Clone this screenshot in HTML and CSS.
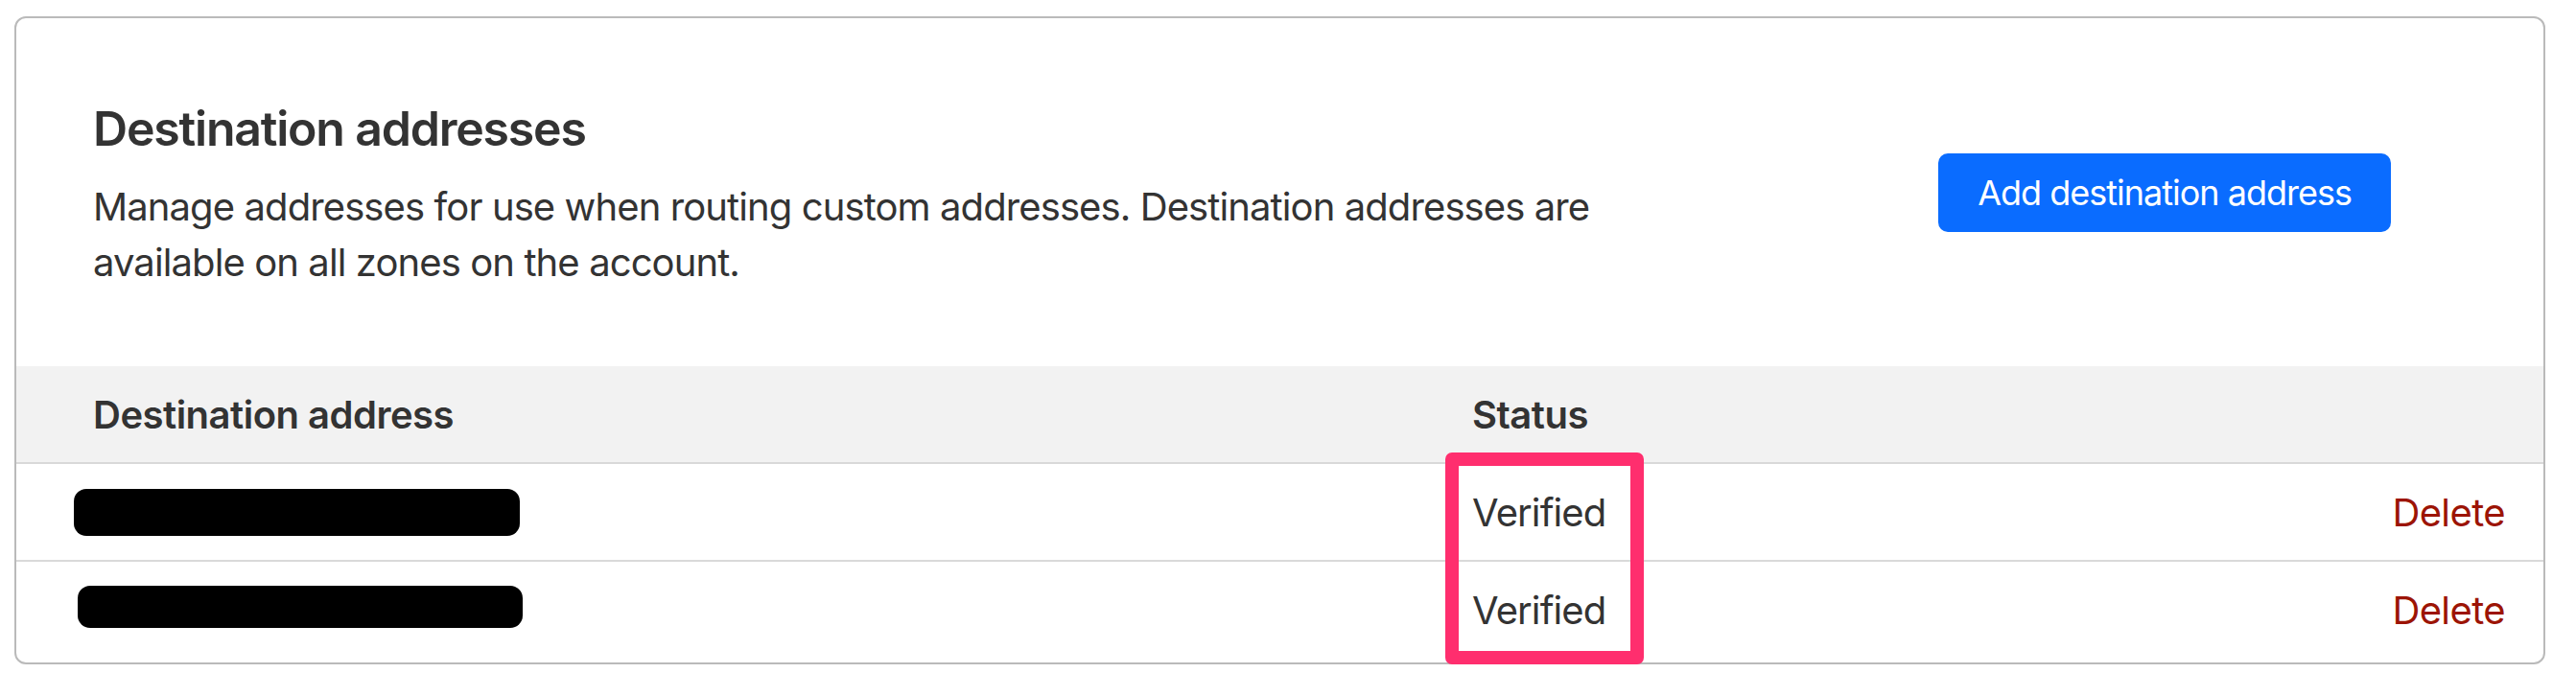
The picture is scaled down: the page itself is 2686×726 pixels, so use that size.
FILE: index.html
```html
<!DOCTYPE html>
<html lang="en">
<head>
<meta charset="utf-8">
<title>Destination addresses</title>
<link rel="stylesheet" href="styles.css">
</head>
<body>
<section class="card">
  <div class="intro">
    <div class="intro-text">
      <h2 class="title">Destination addresses</h2>
      <p class="desc">Manage addresses for use when routing custom addresses. Destination addresses are available on all zones on the account.</p>
    </div>
    <button class="btn" type="button">Add destination address</button>
  </div>
  <div class="table">
    <div class="row head">
      <div class="cell">Destination address</div>
      <div class="cell">Status</div>
      <div class="cell"></div>
    </div>
    <div class="row">
      <div class="cell"><span class="redact redact-a"></span></div>
      <div class="cell">Verified</div>
      <div class="cell del">Delete</div>
    </div>
    <div class="row">
      <div class="cell"><span class="redact redact-b"></span></div>
      <div class="cell">Verified</div>
      <div class="cell del">Delete</div>
    </div>
  </div>
  <div class="highlight"></div>
</section>
</body>
</html>
```
FILE: styles.css
```css
html, body {
  margin: 0;
  padding: 0;
  background: #ffffff;
}
body {
  font-family: Inter, "Noto Sans", "Liberation Sans", sans-serif;
  color: #333333;
}
.card {
  position: relative;
  margin: 17px 32px 0 15px;
  border: 2px solid #bababa;
  border-radius: 12px;
  background: #ffffff;
}
.intro {
  display: flex;
  align-items: center;
  justify-content: space-between;
  padding: 79px 159px 79px 80px;
}
.intro-text {
  margin-top: 6px;
}
.title {
  margin: 0;
  font-size: 50px;
  line-height: 60px;
  font-weight: 600;
  letter-spacing: -1.2px;
  color: #333333;
}
.desc {
  margin: 23px 0 0 0;
  max-width: 1660px;
  font-size: 40px;
  line-height: 58px;
  font-weight: 400;
  letter-spacing: -0.9px;
  color: #333333;
}
.btn {
  height: 82px;
  padding: 0 41px;
  border: 0;
  border-radius: 10px;
  background: #0a6cff;
  color: #ffffff;
  font-family: inherit;
  font-size: 36px;
  font-weight: 400;
  letter-spacing: -1px;
}
.table {
  padding-bottom: 5px;
}
.row {
  display: grid;
  grid-template-columns: 1438px 1fr auto;
  align-items: center;
  height: 100px;
  padding: 0 40px 0 80px;
  font-size: 40px;
  letter-spacing: -0.9px;
}
.row + .row {
  border-top: 2px solid #d9d9d9;
}
.head {
  background: #f2f2f2;
  font-weight: 600;
  letter-spacing: -0.5px;
}
.del {
  color: #9c1405;
  letter-spacing: -0.6px;
}
.redact {
  display: block;
  background: #000000;
  border-radius: 13px;
}
.redact-a {
  width: 465px;
  height: 49px;
  margin-left: -20px;
}
.redact-b {
  width: 464px;
  height: 44px;
  margin-left: -16px;
  margin-top: -6px;
}
.highlight {
  position: absolute;
  left: 1490px;
  top: 453px;
  width: 207px;
  height: 221px;
  box-sizing: border-box;
  border: 14px solid #ff2e6e;
  border-radius: 7px;
}
```
